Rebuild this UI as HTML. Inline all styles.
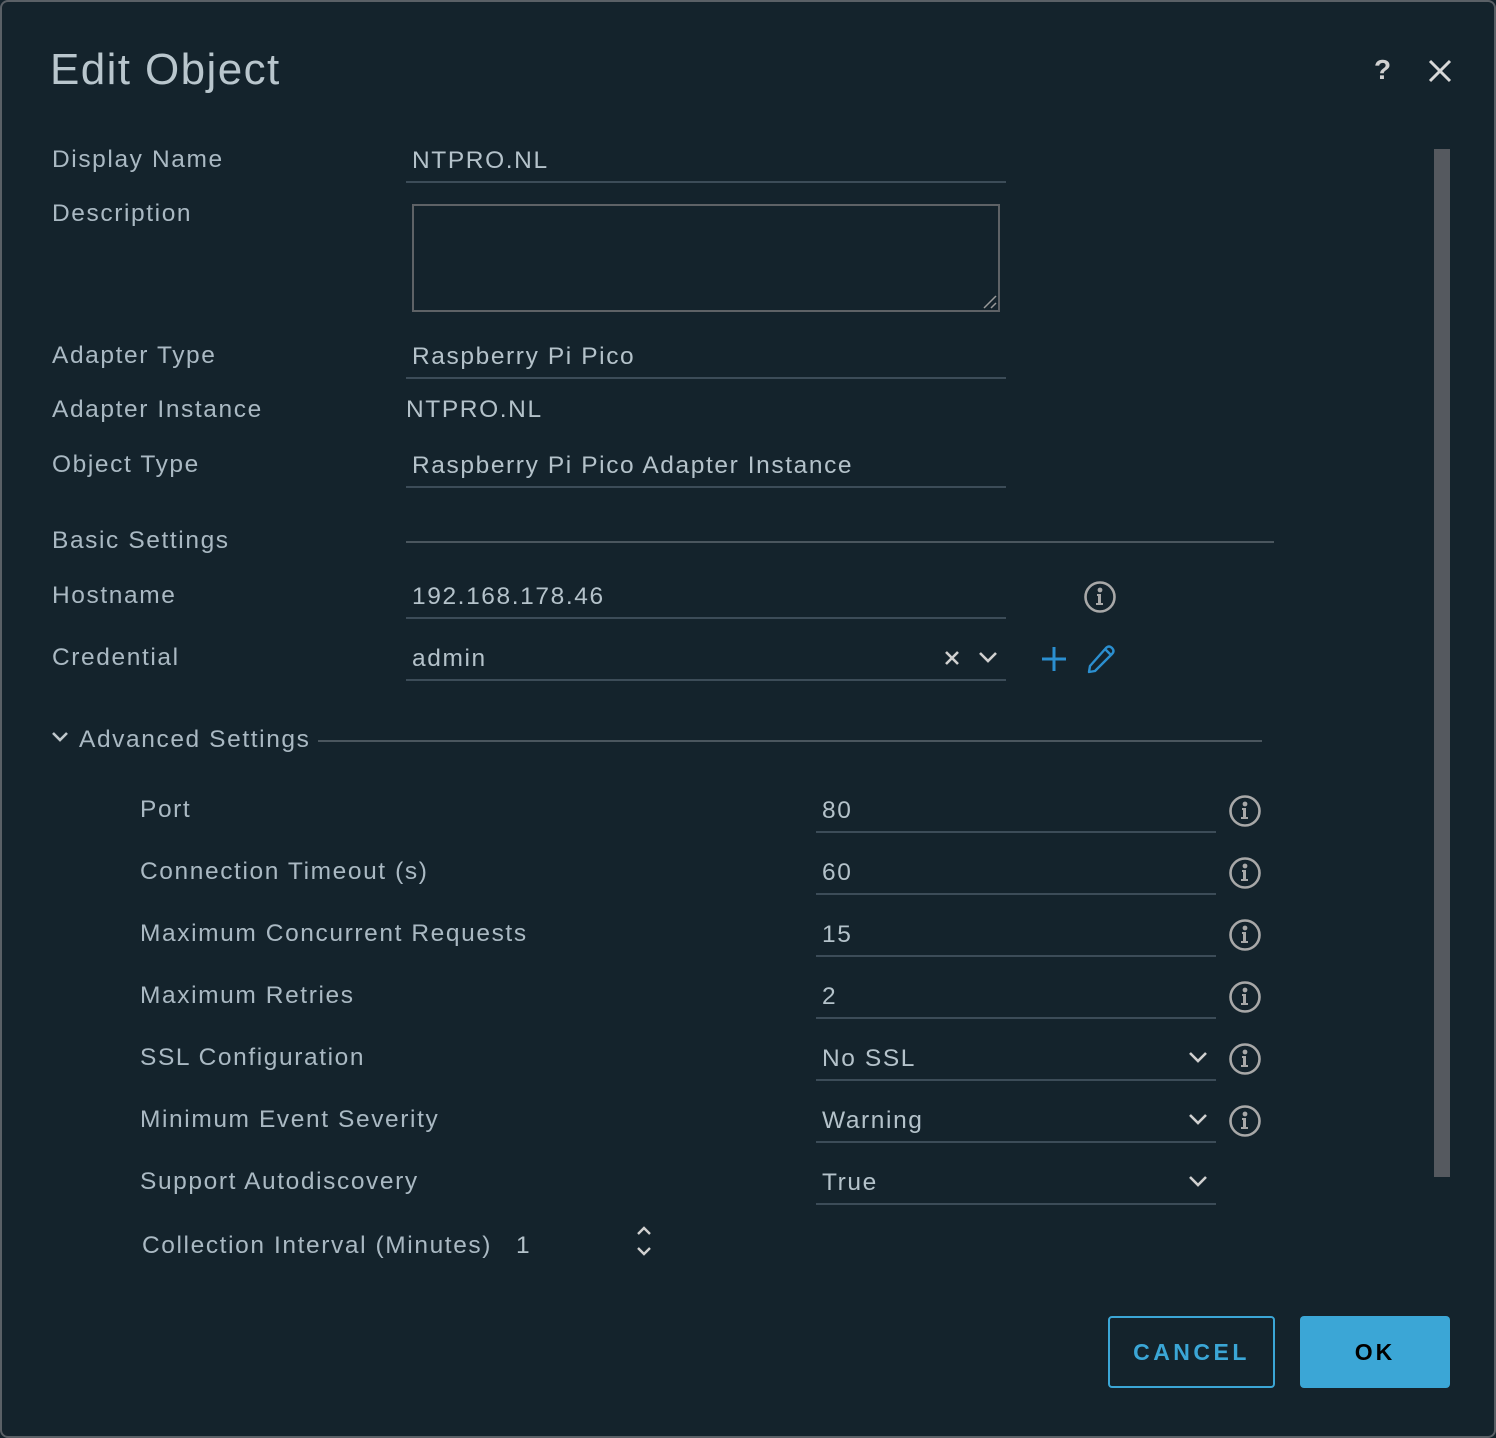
<!DOCTYPE html>
<html><head><meta charset="utf-8"><style>
*{margin:0;padding:0;box-sizing:border-box}
html,body{width:1496px;height:1438px;background:#14232c;overflow:hidden}
body{font-family:"Liberation Sans",sans-serif;color:#aab9c3;position:relative}
.frame{position:absolute;left:0;top:0;width:1496px;height:1438px;border:2px solid #5a6066;border-radius:8px;background:#14232c}
.t{position:absolute;font-size:24.5px;line-height:30px;white-space:nowrap;letter-spacing:1.6px}
.v{color:#b4c2ca}
.ln{position:absolute;height:2px;background:#3c4c58}
svg{position:absolute;overflow:visible}
</style></head><body>
<div class="frame"></div>
<div class="t" style="left:50px;top:44px;font-size:44px;line-height:52px;color:#b9c6cd;letter-spacing:1.4px">Edit Object</div>
<div class="t" style="left:1374px;top:55px;font-size:28px;color:#d0d0d0;font-weight:bold;letter-spacing:0">?</div>
<svg style="left:1428px;top:59px" width="24" height="24"><path d="M2 2L22 22M22 2L2 22" stroke="#d8d8d8" stroke-width="3"/></svg>
<div style="position:absolute;left:1434px;top:149px;width:16px;height:1028px;background:#55595f"></div>

<div class="t" style="left:52px;top:145px">Display Name</div>
<div class="t v" style="left:412px;top:146px">NTPRO.NL</div>
<div class="ln" style="left:406px;top:181px;width:600px"></div>
<div class="t" style="left:52px;top:199px">Description</div>
<div style="position:absolute;left:412px;top:204px;width:588px;height:108px;border:2px solid #5e6266"></div>
<svg style="left:982px;top:294px" width="16" height="16"><path d="M2 14L14 2M9 14L14 9" stroke="#9a9a9a" stroke-width="1.5"/></svg>
<div class="t" style="left:52px;top:341px">Adapter Type</div>
<div class="t v" style="left:412px;top:342px">Raspberry Pi Pico</div>
<div class="ln" style="left:406px;top:377px;width:600px"></div>
<div class="t" style="left:52px;top:395px">Adapter Instance</div>
<div class="t v" style="left:406px;top:395px">NTPRO.NL</div>
<div class="t" style="left:52px;top:450px">Object Type</div>
<div class="t v" style="left:412px;top:451px">Raspberry Pi Pico Adapter Instance</div>
<div class="ln" style="left:406px;top:486px;width:600px"></div>
<div class="t" style="left:52px;top:526px">Basic Settings</div>
<div class="ln" style="left:406px;top:541px;width:868px;background:#4a565e"></div>
<div class="t" style="left:52px;top:581px">Hostname</div>
<div class="t v" style="left:412px;top:582px">192.168.178.46</div>
<div class="ln" style="left:406px;top:617px;width:600px"></div>
<div class="t" style="left:52px;top:643px">Credential</div>
<div class="t v" style="left:412px;top:644px">admin</div>
<div class="ln" style="left:406px;top:679px;width:600px"></div>
<svg style="left:944px;top:650px" width="16" height="16"><path d="M2 2L14 14M14 2L2 14" stroke="#d0d0d0" stroke-width="2.6"/></svg>
<svg style="left:978px;top:651px" width="20" height="12"><path d="M2 2L10 10L18 2" stroke="#d0d0d0" stroke-width="2.6" fill="none"/></svg>
<svg style="left:1042px;top:647px" width="24" height="24"><path d="M12 0V24M0 12H24" stroke="#2b8fd0" stroke-width="3"/></svg>
<svg style="left:1086px;top:644px" width="30" height="30"><path d="M4 22L20 4Q23 1 26 4Q29 7 26 10L9 27L3 28Z M19 5L25 11" stroke="#2b8fd0" stroke-width="2.4" fill="none" stroke-linejoin="round"/></svg>

<svg style="left:51px;top:731px" width="18" height="12"><path d="M2 2L9 9L16 2" stroke="#c0c8cc" stroke-width="2.6" fill="none"/></svg>
<div class="t" style="left:79px;top:725px">Advanced Settings</div>
<div class="ln" style="left:318px;top:740px;width:944px;background:#4a565e"></div>

<div class="t" style="left:140px;top:795px">Port</div>
<div class="t v" style="left:822px;top:796px">80</div>
<div class="ln" style="left:816px;top:831px;width:400px"></div>
<div class="t" style="left:140px;top:857px">Connection Timeout (s)</div>
<div class="t v" style="left:822px;top:858px">60</div>
<div class="ln" style="left:816px;top:893px;width:400px"></div>
<div class="t" style="left:140px;top:919px">Maximum Concurrent Requests</div>
<div class="t v" style="left:822px;top:920px">15</div>
<div class="ln" style="left:816px;top:955px;width:400px"></div>
<div class="t" style="left:140px;top:981px">Maximum Retries</div>
<div class="t v" style="left:822px;top:982px">2</div>
<div class="ln" style="left:816px;top:1017px;width:400px"></div>
<div class="t" style="left:140px;top:1043px">SSL Configuration</div>
<div class="t v" style="left:822px;top:1044px">No SSL</div>
<div class="ln" style="left:816px;top:1079px;width:400px"></div>
<div class="t" style="left:140px;top:1105px">Minimum Event Severity</div>
<div class="t v" style="left:822px;top:1106px">Warning</div>
<div class="ln" style="left:816px;top:1141px;width:400px"></div>
<div class="t" style="left:140px;top:1167px">Support Autodiscovery</div>
<div class="t v" style="left:822px;top:1168px">True</div>
<div class="ln" style="left:816px;top:1203px;width:400px"></div>
<svg style="left:1188px;top:1051px" width="20" height="12"><path d="M2 2L10 10L18 2" stroke="#d0d0d0" stroke-width="2.6" fill="none"/></svg>
<svg style="left:1188px;top:1113px" width="20" height="12"><path d="M2 2L10 10L18 2" stroke="#d0d0d0" stroke-width="2.6" fill="none"/></svg>
<svg style="left:1188px;top:1175px" width="20" height="12"><path d="M2 2L10 10L18 2" stroke="#d0d0d0" stroke-width="2.6" fill="none"/></svg>

<div class="t" style="left:142px;top:1231px">Collection Interval (Minutes)</div>
<div class="t v" style="left:516px;top:1231px">1</div>
<svg style="left:636px;top:1226px" width="16" height="30"><path d="M2 8L8 2L14 8M2 22L8 28L14 22" stroke="#d0d0d0" stroke-width="2.4" fill="none"/></svg>

<svg width="0" height="0" style="position:absolute"><defs><g id="info"><circle cx="16" cy="16" r="14.5" stroke="#a8a8a8" stroke-width="2.6" fill="none"/><circle cx="16" cy="9" r="2.4" fill="#a8a8a8"/><path d="M13 13H17V22H19V24H12V22H14V15H13Z" fill="#a8a8a8"/></g></defs></svg>
<svg style="left:1084px;top:581px" width="32" height="32"><use href="#info"/></svg>
<svg style="left:1229px;top:795px" width="32" height="32"><use href="#info"/></svg>
<svg style="left:1229px;top:857px" width="32" height="32"><use href="#info"/></svg>
<svg style="left:1229px;top:919px" width="32" height="32"><use href="#info"/></svg>
<svg style="left:1229px;top:981px" width="32" height="32"><use href="#info"/></svg>
<svg style="left:1229px;top:1043px" width="32" height="32"><use href="#info"/></svg>
<svg style="left:1229px;top:1105px" width="32" height="32"><use href="#info"/></svg>

<div style="position:absolute;left:1108px;top:1316px;width:167px;height:72px;border:2px solid #3ba6d6;border-radius:4px;color:#3ba6d6;font-size:23px;letter-spacing:3.5px;line-height:68px;text-align:center;font-weight:bold">CANCEL</div>
<div style="position:absolute;left:1300px;top:1316px;width:150px;height:72px;background:#3ba6d6;border-radius:4px;color:#000;font-size:23px;letter-spacing:3px;line-height:72px;text-align:center;font-weight:bold">OK</div>
</body></html>
